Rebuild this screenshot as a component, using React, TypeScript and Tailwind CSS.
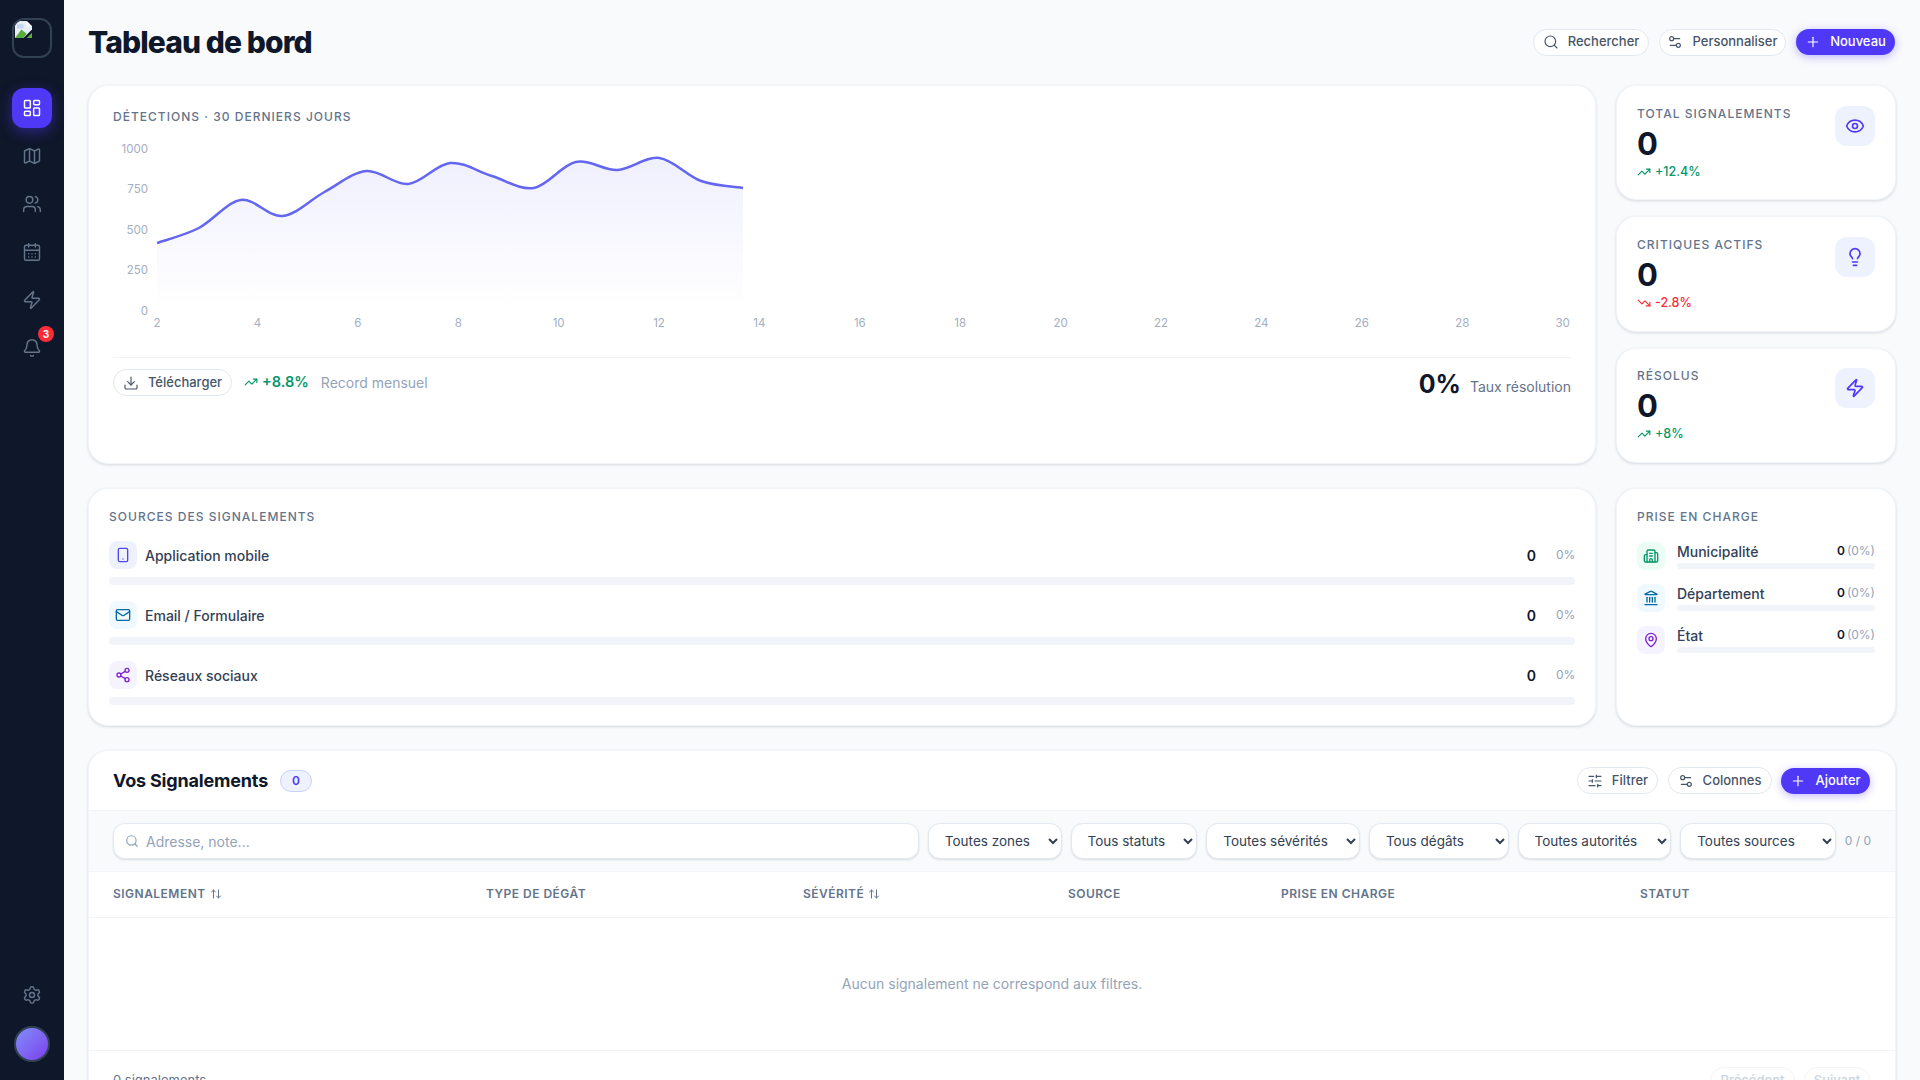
import {
  ArrowUpDown,
  Bell,
  Building2,
  CalendarDays,
  Download,
  Eye,
  Landmark,
  LayoutDashboard,
  Lightbulb,
  Mail,
  Map as MapIcon,
  MapPin,
  Plus,
  Search,
  Settings,
  Settings2,
  Share2,
  SlidersHorizontal,
  Smartphone,
  TrendingDown,
  TrendingUp,
  Users,
  Zap,
} from "lucide-react";
import type { ComponentType, ReactNode } from "react";

type IconType = ComponentType<{ size?: number; strokeWidth?: number; className?: string }>;

const fontStack = "font-['Inter','Noto_Sans',sans-serif]";

// points of the detection curve, in svg coordinates
const curveY = [107, 92, 64, 80, 56, 35, 48, 27, 40, 52, 26, 34, 22, 45, 52];
const curveStart = 44;
const curveStep = 41.86;

function buildLine() {
  const pts = curveY.map((y, i) => [curveStart + i * curveStep, y]);
  let d = `M${pts[0][0]} ${pts[0][1]}`;
  for (let i = 0; i < pts.length - 1; i++) {
    const p0 = pts[Math.max(i - 1, 0)];
    const p1 = pts[i];
    const p2 = pts[i + 1];
    const p3 = pts[Math.min(i + 2, pts.length - 1)];
    const c1x = p1[0] + (p2[0] - p0[0]) / 6;
    const c1y = p1[1] + (p2[1] - p0[1]) / 6;
    const c2x = p2[0] - (p3[0] - p1[0]) / 6;
    const c2y = p2[1] - (p3[1] - p1[1]) / 6;
    d += ` C${c1x} ${c1y} ${c2x} ${c2y} ${p2[0]} ${p2[1]}`;
  }
  return d;
}

const linePath = buildLine();
const areaPath = `${linePath} L630 172 L44 172 Z`;

function Card({ className, children }: { className: string; children: ReactNode }) {
  return (
    <div
      className={`rounded-[20px] border border-[#f1f5f9] bg-white shadow-[0_1px_3px_rgba(15,23,42,0.14)] ${className}`}
    >
      {children}
    </div>
  );
}

function SectionTitle({ children }: { children: ReactNode }) {
  return (
    <p className="text-[12px] leading-4 font-medium tracking-[0.085em] text-[#64748b] uppercase">
      {children}
    </p>
  );
}

function GhostButton({ icon: Icon, label, width }: { icon: IconType; label: string; width: string }) {
  return (
    <button
      className={`flex h-[27px] items-center justify-center gap-[9px] rounded-full border border-[#e2e8f0] bg-white text-[13px] font-medium text-[#475569] ${width}`}
    >
      <Icon size={16} strokeWidth={1.75} className="text-[#475569]" />
      {label}
    </button>
  );
}

function PrimaryButton({ label, width }: { label: string; width: string }) {
  return (
    <button
      className={`flex h-[26px] items-center justify-center gap-[9px] rounded-full bg-[#4f39f6] text-[13px] font-medium text-white shadow-[0_2px_8px_rgba(79,57,246,0.35)] ${width}`}
    >
      <Plus size={16} strokeWidth={1.75} />
      {label}
    </button>
  );
}

function BrokenLogo() {
  return (
    <svg width="17" height="17" viewBox="0 0 16 16" className="absolute top-[1px] left-[1px]">
      <path d="M0 0h11l5 5v3L12 12 8 16H0z" fill="#e8eef8" />
      <path d="M2 3h6v4H2z" fill="#c3d6f4" />
      <path d="M0 16 L6 8 L11 12 L8 16 Z" fill="#5aae3c" />
      <path d="M11 0v5h5z" fill="#ffffff" />
      <path d="M11 16l5-5v5z" fill="#5aae3c" />
    </svg>
  );
}

function NavItem({ icon: Icon, active }: { icon: IconType; active?: boolean }) {
  return (
    <div
      className={`flex h-10 w-10 items-center justify-center rounded-xl ${
        active ? "bg-[#4f39f6] text-white shadow-[0_4px_14px_rgba(79,57,246,0.45)]" : "text-[#64748b]"
      }`}
    >
      <Icon size={20} strokeWidth={1.75} />
    </div>
  );
}

function Sidebar() {
  return (
    <aside className="flex h-screen w-16 shrink-0 flex-col items-center bg-[#0f172a] pt-[18px] pb-[18px]">
      <div className="relative h-10 w-10 overflow-hidden rounded-xl border-2 border-[#334155]">
        <BrokenLogo />
      </div>
      <nav className="mt-[30px] flex flex-col gap-2">
        <NavItem icon={LayoutDashboard} active />
        <NavItem icon={MapIcon} />
        <NavItem icon={Users} />
        <NavItem icon={CalendarDays} />
        <NavItem icon={Zap} />
        <div className="relative">
          <NavItem icon={Bell} />
          <span className="absolute top-[-2px] right-[-2px] flex h-4 w-4 items-center justify-center rounded-full bg-[#fb2c36] text-[10px] font-bold text-white">
            3
          </span>
        </div>
      </nav>
      <div className="mt-auto flex flex-col items-center gap-[11px]">
        <NavItem icon={Settings} />
        <div className="h-9 w-9 rounded-full border-2 border-[#334155] bg-gradient-to-br from-[#818cf8] to-[#7c3aed]" />
      </div>
    </aside>
  );
}

function DetectionChart() {
  return (
    <svg width="1458" height="200" className="mt-[11px] block">
      <defs>
        <linearGradient id="area" x1="0" y1="0" x2="0" y2="1">
          <stop offset="0%" stopColor="#6366f1" stopOpacity="0.1" />
          <stop offset="100%" stopColor="#6366f1" stopOpacity="0" />
        </linearGradient>
      </defs>
      <path d={areaPath} fill="url(#area)" />
      <path d={linePath} fill="none" stroke="#6366f1" strokeWidth="2.5" />
      <g fontSize="11.5" fill="#a3aec2" textAnchor="end">
        {[
          ["1000", 13],
          ["750", 53],
          ["500", 94],
          ["250", 134],
          ["0", 175],
        ].map(([label, y]) => (
          <text key={label} x="35" y={Number(y) + 4}>
            {label}
          </text>
        ))}
      </g>
      <g fontSize="11.5" fill="#a3aec2" textAnchor="middle">
        {Array.from({ length: 15 }, (_, i) => (
          <text key={i} x={44 + i * 100.4} y="191">
            {2 + i * 2}
          </text>
        ))}
      </g>
    </svg>
  );
}

function StatCard({
  title,
  trend,
  down,
  icon: Icon,
}: {
  title: string;
  trend: string;
  down?: boolean;
  icon: IconType;
}) {
  const TrendIcon = down ? TrendingDown : TrendingUp;
  return (
    <Card className="flex h-[115.3px] items-start justify-between px-5 pt-[19.5px]">
      <div>
        <SectionTitle>{title}</SectionTitle>
        <p className="mt-[2px] text-[31px] leading-[40px] font-bold text-[#0f172a]">0</p>
        <p
          className={`flex items-center gap-[4px] text-[12.5px] leading-4 font-medium ${
            down ? "text-[#fb2c36]" : "text-[#059669]"
          }`}
        >
          <TrendIcon size={14} strokeWidth={2} />
          {trend}
        </p>
      </div>
      <div className="flex h-10 w-10 items-center justify-center rounded-xl bg-[#eef2ff] text-[#4f39f6]">
        <Icon size={20} strokeWidth={2} />
      </div>
    </Card>
  );
}

function SourceRow({
  icon: Icon,
  label,
  tile,
  tint,
}: {
  icon: IconType;
  label: string;
  tile: string;
  tint: string;
}) {
  return (
    <div>
      <div className="flex h-7 items-center">
        <div className={`flex h-7 w-7 items-center justify-center rounded-lg ${tile} ${tint}`}>
          <Icon size={16} strokeWidth={2} />
        </div>
        <span className="ml-2 text-[14px] font-medium text-[#334155]">{label}</span>
        <span className="ml-auto text-[14px] font-semibold text-[#0f172a]">0</span>
        <span className="ml-[20px] w-[19px] text-right text-[12px] text-[#94a3b8]">0%</span>
      </div>
      <div className="mt-2 h-2 rounded-full bg-[#f1f5f9]" />
    </div>
  );
}

function AuthorityRow({
  icon: Icon,
  label,
  tile,
  tint,
}: {
  icon: IconType;
  label: string;
  tile: string;
  tint: string;
}) {
  return (
    <div className="flex items-start gap-3">
      <div className={`flex h-7 w-7 shrink-0 items-center justify-center rounded-lg ${tile} ${tint}`}>
        <Icon size={16} strokeWidth={2} />
      </div>
      <div className="mt-[-3px] min-w-0 flex-1">
        <div className="flex h-[24px] items-center justify-between">
          <span className="text-[14px] font-medium text-[#334155]">{label}</span>
          <span className="text-[12px] text-[#94a3b8]">
            <b className="mr-[2px] font-semibold text-[#0f172a]">0</b>(0%)
          </span>
        </div>
        <div className="h-[6px] rounded-full bg-[#f1f5f9]" />
      </div>
    </div>
  );
}

const filters = [
  ["Toutes zones", "w-[134px]"],
  ["Tous statuts", "w-[127px]"],
  ["Toutes sévérités", "w-[154px]"],
  ["Tous dégâts", "w-[140px]"],
  ["Toutes autorités", "w-[154px]"],
  ["Toutes sources", "w-[156px]"],
];

const columns = [
  { label: "Signalement", width: "w-[397px] pl-[24px]", sort: true },
  { label: "Type de dégât", width: "w-[317px]" },
  { label: "Sévérité", width: "w-[265px]", sort: true },
  { label: "Source", width: "w-[213px]" },
  { label: "Prise en charge", width: "w-[359px]" },
  { label: "Statut", width: "" },
];

function ReportsTable() {
  return (
    <Card className="mt-6 overflow-hidden">
      <div className="flex h-[60px] items-center border-b border-[#f1f5f9] px-6">
        <h2 className="text-[18px] font-bold tracking-[-0.01em] text-[#0f172a]">Vos Signalements</h2>
        <span className="ml-3 flex h-[22px] w-[32px] items-center justify-center rounded-full border border-[#c7d2fe] bg-[#eef2ff] text-[12px] font-semibold text-[#4f39f6]">
          0
        </span>
        <div className="ml-auto flex items-center gap-[9.5px] pr-[1px]">
          <GhostButton icon={SlidersHorizontal} label="Filtrer" width="w-[81px]" />
          <GhostButton icon={Settings2} label="Colonnes" width="w-[104px]" />
          <PrimaryButton label="Ajouter" width="w-[89px]" />
        </div>
      </div>
      <div className="flex h-[61px] items-center gap-[9px] border-b border-[#f1f5f9] bg-[#f8fafc] pr-[24px] pl-6">
        <div className="relative w-[808px]">
          <Search size={14} className="absolute top-[11px] left-3 text-[#94a3b8]" />
          <input
            placeholder="Adresse, note..."
            className="h-9 w-full rounded-xl border border-[#e2e8f0] bg-white pr-3 pl-8 text-[14px] shadow-[0_1px_2px_rgba(15,23,42,0.12)] outline-none placeholder:text-[#94a3b8]"
          />
        </div>
        {filters.map(([label, width]) => (
          <select
            key={label}
            defaultValue={label}
            className={`h-9 rounded-xl border border-[#e2e8f0] bg-white pl-[12px] text-[13.5px] text-[#334155] shadow-[0_1px_2px_rgba(15,23,42,0.12)] outline-none ${width}`}
          >
            <option>{label}</option>
          </select>
        ))}
        <span className="whitespace-nowrap text-[12px] text-[#94a3b8]">0 / 0</span>
      </div>
      <table className="w-full table-fixed border-collapse text-left">
        <thead>
          <tr className="h-[45px] border-b border-[#f1f5f9]">
            {columns.map((col) => (
              <th
                key={col.label}
                className={`text-[12px] font-semibold tracking-[0.04em] text-[#64748b] uppercase ${col.width}`}
              >
                <span className="flex items-center gap-[4px]">
                  {col.label}
                  {col.sort ? <ArrowUpDown size={12} strokeWidth={2} /> : null}
                </span>
              </th>
            ))}
          </tr>
        </thead>
        <tbody>
          <tr className="h-[133px] border-b border-[#f1f5f9]">
            <td colSpan={6} className="text-center text-[14px] text-[#94a3b8]">
              Aucun signalement ne correspond aux filtres.
            </td>
          </tr>
        </tbody>
      </table>
      <div className="flex h-[60px] items-center justify-between px-6">
        <span className="text-[13px] text-[#64748b]">0 signalements</span>
        <div className="flex gap-[9px] pr-[1px]">
          <button className="h-[27px] w-[85px] rounded-full border border-[#f1f5f9] text-[13px] font-medium text-[#cbd5e1]">
            Précédent
          </button>
          <button className="h-[27px] w-[66px] rounded-full border border-[#f1f5f9] text-[13px] font-medium text-[#cbd5e1]">
            Suivant
          </button>
        </div>
      </div>
    </Card>
  );
}

export default function App() {
  return (
    <div className={`flex h-screen overflow-hidden bg-[#f8fafc] ${fontStack}`}>
      <Sidebar />
      <main className="min-w-0 flex-1 pr-6 pl-6">
        <header className="flex h-[85px] items-center justify-between">
          <h1 className="text-[30px] font-extrabold tracking-[-0.03em] text-[#0f172a]">Tableau de bord</h1>
          <div className="mb-[1px] flex items-center gap-[10px] pr-[1px]">
            <GhostButton icon={Search} label="Rechercher" width="w-[116px]" />
            <GhostButton icon={Settings2} label="Personnaliser" width="w-[127px]" />
            <PrimaryButton label="Nouveau" width="w-[99px]" />
          </div>
        </header>

        <div className="flex gap-5">
          <Card className="h-[379px] min-w-0 flex-1 px-[24px] pt-[23px]">
            <SectionTitle>Détections · 30 derniers jours</SectionTitle>
            <DetectionChart />
            <div className="mt-[21px] flex h-[60px] items-start border-t border-[#f1f5f9] pt-[11px]">
              <GhostButton icon={Download} label="Télécharger" width="w-[119px]" />
              <TrendingUp size={14} strokeWidth={2} className="mt-[6px] ml-3 text-[#059669]" />
              <span className="mt-[2px] ml-[4px] text-[14.5px] font-semibold text-[#059669]">+8.8%</span>
              <span className="mt-[3px] ml-3 text-[14px] text-[#94a3b8]">Record mensuel</span>
              <span className="mt-[-3px] ml-auto text-[25px] leading-9 font-bold text-[#0f172a]">0%</span>
              <span className="mt-[7px] ml-[9px] text-[14px] text-[#64748b]">Taux résolution</span>
            </div>
          </Card>
          <div className="flex w-[280px] shrink-0 flex-col gap-4">
            <StatCard title="Total signalements" trend="+12.4%" icon={Eye} />
            <StatCard title="Critiques actifs" trend="-2.8%" down icon={Lightbulb} />
            <StatCard title="Résolus" trend="+8%" icon={Zap} />
          </div>
        </div>

        <div className="mt-6 flex gap-5">
          <Card className="h-[238px] min-w-0 flex-1 px-5 pt-5">
            <SectionTitle>Sources des signalements</SectionTitle>
            <div className="mt-[16px] flex flex-col gap-[16px]">
              <SourceRow icon={Smartphone} label="Application mobile" tile="bg-[#eef2ff]" tint="text-[#4f46e5]" />
              <SourceRow icon={Mail} label="Email / Formulaire" tile="bg-[#f0f9ff]" tint="text-[#0369a1]" />
              <SourceRow icon={Share2} label="Réseaux sociaux" tile="bg-[#f5f3ff]" tint="text-[#7e22ce]" />
            </div>
          </Card>
          <Card className="h-[238px] w-[280px] shrink-0 px-5 pt-5">
            <SectionTitle>Prise en charge</SectionTitle>
            <div className="mt-[17px] flex flex-col gap-[14px]">
              <AuthorityRow icon={Building2} label="Municipalité" tile="bg-[#ecfdf5]" tint="text-[#059669]" />
              <AuthorityRow icon={Landmark} label="Département" tile="bg-[#f0f9ff]" tint="text-[#0369a1]" />
              <AuthorityRow icon={MapPin} label="État" tile="bg-[#f5f3ff]" tint="text-[#7e22ce]" />
            </div>
          </Card>
        </div>

        <ReportsTable />
      </main>
    </div>
  );
}
